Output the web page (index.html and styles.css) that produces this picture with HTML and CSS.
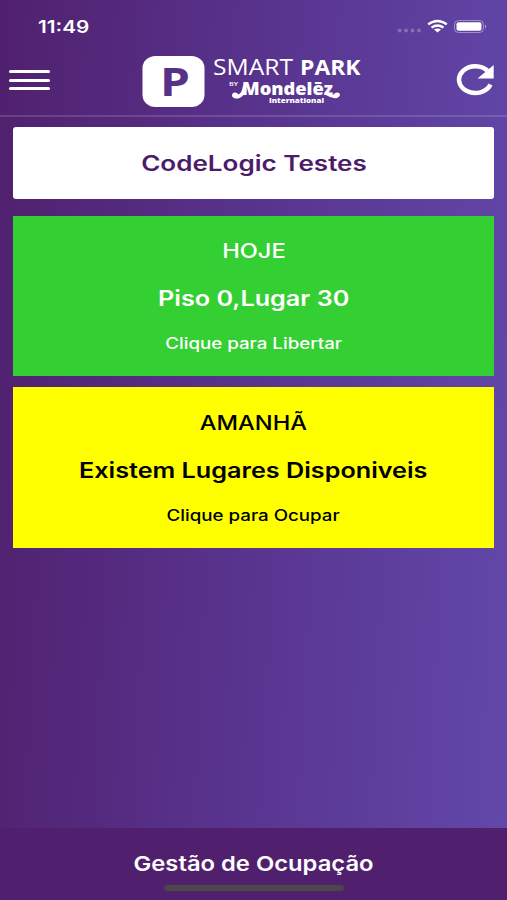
FILE: index.html
```
<!DOCTYPE html>
<html lang="pt">
<head>
    <meta charset="UTF-8">
    <meta name="viewport" content="width=device-width, initial-scale=1.0">
    <title>Smart Park</title>
    <link rel="stylesheet" href="styles.css">
</head>
<body>
    <!-- status bar -->
    <div class="status-bar">
        <span class="time">11:49</span>
        <svg class="status-icons" width="92" height="16" viewBox="0 0 92 16">
            <g fill="#fff" fill-opacity="0.25">
                <circle cx="3.5" cy="11.5" r="2"/>
                <circle cx="10" cy="11.5" r="2"/>
                <circle cx="16.5" cy="11.5" r="2"/>
                <circle cx="23" cy="11.5" r="2"/>
            </g>
            <g fill="none" stroke="#fff" stroke-width="2.4">
                <path d="M32.2 5.4Q41.5 -1.6 50.8 5.4"/>
                <path d="M35.5 8.6Q41.5 4.2 47.5 8.6"/>
            </g>
            <path d="M38 10.6Q41.5 8.2 45 10.6L41.5 13.5Z" fill="#fff"/>
            <rect x="58.5" y="1.5" width="29" height="12" rx="4" fill="none" stroke="#fff" stroke-opacity="0.4"/>
            <rect x="60.5" y="3.3" width="25" height="8.4" rx="2" fill="#fff"/>
            <path d="M89 5.5Q91.5 7.5 89 9.5Z" fill="#fff" fill-opacity="0.5"/>
        </svg>
    </div>

    <!-- header -->
    <header class="header">
        <button class="menu-button">
            <span></span>
            <span></span>
            <span></span>
        </button>
        <svg class="logo" width="222" height="54" viewBox="0 0 222 54">
            <rect x="2.5" y="2" width="62" height="51" rx="13" ry="12" fill="#fff"/>
            <text class="logo-p" x="20" y="41.5" textLength="30" lengthAdjust="spacingAndGlyphs">P</text>
            <text class="logo-smart" x="73" y="21" textLength="80" lengthAdjust="spacingAndGlyphs">SMART</text>
            <text class="logo-park" x="160" y="21" textLength="60.5" lengthAdjust="spacingAndGlyphs">PARK</text>
            <text class="logo-by" x="89" y="32" textLength="9" lengthAdjust="spacingAndGlyphs">BY</text>
            <text class="logo-brand" x="102" y="41.2" textLength="91" lengthAdjust="spacingAndGlyphs">Mondelēz</text>
            <!-- swashes on the M and the z -->
            <path d="M107 29Q103 29 102.5 34Q101.5 39 98.5 40.5Q96.5 37.8 93.5 38.8Q91 40.5 92.5 43Q95 45.5 99.5 44Q104.5 42 105.5 36Z"/>
            <path d="M186 41Q192 45 197 44Q201 42 199.5 39.5Q197.5 37.5 194.5 39.5Q193.5 41.5 190 40.5Z"/>
            <text class="logo-sub" x="129" y="49.3" textLength="55" lengthAdjust="spacingAndGlyphs">International</text>
        </svg>
        <button class="refresh-button">
            <svg width="40" height="34" viewBox="0 0 40 34">
                <path d="M33 7.2A16.3 13.4 0 1 0 35.5 20.6" fill="none" stroke="#fff" stroke-width="4.5"/>
                <path d="M38.7 1V14.5H22.5Z" fill="#fff"/>
            </svg>
        </button>
    </header>

    <main class="content">
        <div class="card user-card"><h2>CodeLogic Testes</h2></div>

        <div class="card today">
            <h3>HOJE</h3>
            <h2>Piso 0,Lugar 30</h2>
            <p>Clique para Libertar</p>
        </div>

        <div class="card tomorrow">
            <h3>AMANHÃ</h3>
            <h2>Existem Lugares Disponiveis</h2>
            <p>Clique para Ocupar</p>
        </div>
    </main>

    <footer class="footer">
        <h2>Gestão de Ocupação</h2>
        <div class="home-indicator"></div>
    </footer>
</body>
</html>
```
FILE: styles.css
```
* {
    box-sizing: border-box;
}

body {
    margin: 0;
    height: 900px;
    display: flex;
    flex-direction: column;
    overflow: hidden;
    font-family: Inter, "Liberation Sans", sans-serif;
    color: white;
    background: linear-gradient(93deg, #50206e 0%, #593590 52%, #6248aa 100%);
}

h2, h3, p {
    width: fit-content;
    margin: 0 auto;
    white-space: nowrap;
    transform: scaleX(1.2); /* wide lettering */
}

h2 {
    font-size: 21px;
    line-height: 26px;
    font-weight: 600;
}

h3 {
    font-size: 20px;
    line-height: 24px;
    font-weight: 500;
    transform: scaleX(1.18);
}

p {
    font-size: 15.6px;
    line-height: 20px;
    font-weight: 500;
}

button {
    padding: 0;
    border: none;
    background: none;
    cursor: pointer;
}

.status-bar {
    height: 52px;
    padding: 17px 19px 0 38px;
    display: flex;
    justify-content: space-between;
}

.time {
    font-size: 17px;
    line-height: 21px;
    font-weight: 600;
    transform: scaleX(1.22);
    transform-origin: left;
}

.status-icons {
    margin-top: 2px;
}

.header {
    height: 65px;
    padding: 2px 12px 0 9px;
    display: flex;
    align-items: flex-start;
    border-bottom: 2px solid rgba(255, 255, 255, 0.14);
}

.menu-button {
    width: 41px;
    margin-top: 16px;
    display: flex;
    flex-direction: column;
    gap: 5.5px;
}

.menu-button span {
    width: 41px;
    height: 3px;
    border-radius: 2px;
    background: white;
}

.logo {
    margin-left: 90px;
    fill: white;
}

.logo text {
    font-family: "Open Sans", sans-serif;
}

.logo .logo-p {
    font-size: 40px;
    font-weight: 700;
    fill: #573186;
}

.logo .logo-smart {
    font-size: 21px;
}

.logo .logo-park {
    font-size: 21px;
    font-weight: 700;
}

.logo .logo-by {
    font-size: 6px;
    font-weight: 600;
}

.logo .logo-brand {
    font-size: 17px;
    font-weight: 800;
}

.logo .logo-sub {
    font-size: 7.5px;
    font-weight: 800;
}

.refresh-button {
    height: 34px;
    margin: 10px 0 0 auto;
}

.refresh-button svg {
    display: block;
}

.content {
    flex: 1;
    padding: 10px 13px 0;
}

.card {
    height: 160.5px;
    margin-bottom: 11px;
}

.user-card {
    height: 72px;
    margin-bottom: 16.6px;
    padding-top: 24px;
    border-radius: 3px;
    color: #4c1b6b;
    background: white;
}

.user-card h2 {
    transform: scaleX(1.24);
}

.today {
    padding-top: 23.4px;
    background: #33cf33;
}

.tomorrow {
    padding-top: 24.4px;
    color: black;
    background: #ffff00;
}

.today h2, .tomorrow h2 {
    margin-top: 23px;
    margin-bottom: 22px;
}

.footer {
    height: 72px;
    padding-top: 23px;
    display: flex;
    flex-direction: column;
    align-items: center;
    background: #50206e;
}

.footer h2 {
    margin: 0;
    font-size: 20.5px;
    transform: scaleX(1.16);
}

.home-indicator {
    width: 180px;
    height: 6px;
    margin-top: 8px;
    border-radius: 3px;
    background: #4b474b;
}
```
